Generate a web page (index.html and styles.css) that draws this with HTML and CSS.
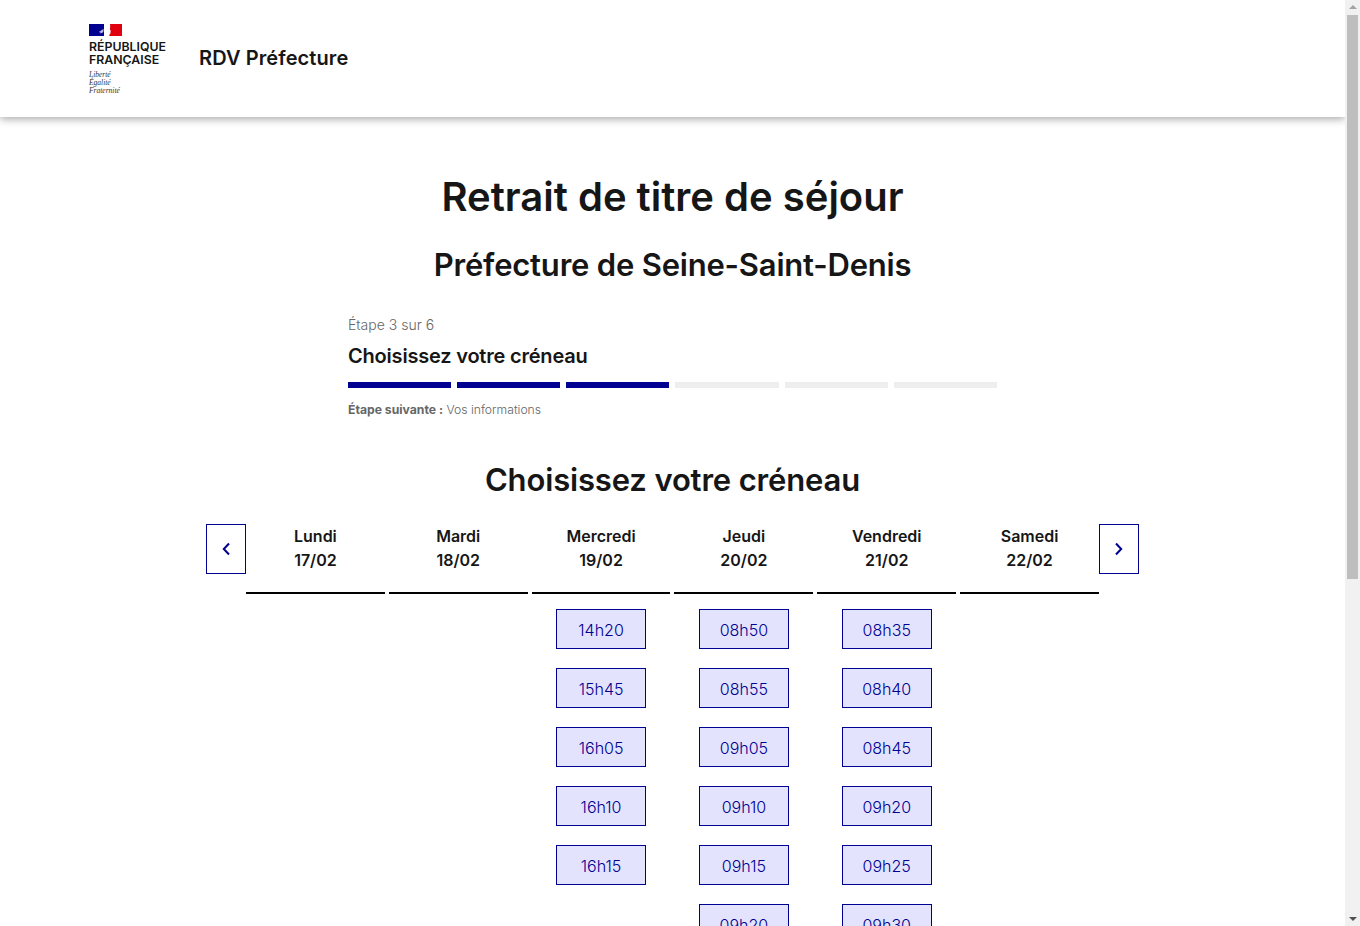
FILE: index.html
```html
<!DOCTYPE html>
<html lang="fr">
<head>
	<meta charset="UTF-8">
	<title>Retrait de titre de séjour - RDV Préfecture</title>
	<link rel="stylesheet" href="styles.css">
</head>
<body>
	<div class="page">
		<header class="entete">
			<div class="logo">
				<svg class="drapeau" viewBox="0 0 33 12" width="33" height="12" aria-hidden="true">
					<rect width="33" height="12" fill="#fff"/>
					<rect width="15" height="12" fill="#000091"/>
					<path d="M21 0h12v12H20.500c-.6-1 .2-2.200 1-2.600l-.2-1 .6-.5-.6-.6.5-.5-.9-1.300C20.600 4.300 21.700 3 21 0z" fill="#e1000f"/>
					<path d="M14.500 5c-1.200.4-2.300 1.300-3 2.100-.5.500-1.100.8-1.700 1 .7.300 1.300.3 1.900.1-.2.400-.5.700-.9 1 1.200.1 2.400-.4 3.100-1 .3-.3.5-.6.600-.9z" fill="#b9badf"/>
					<path d="M15 0h3.500c.8 1.600 1.200 3 1.900 4.300l.7 1.300-.6.4.5.6-.5.6.3 1c-.9.500-1.700 1.700-1.100 3.800H15z" fill="#fff"/>
				</svg>
				<p class="logoNom">République<br>Française</p>
				<p class="logoDevise">Liberté<br>Égalité<br>Fraternité</p>
			</div>
			<p class="service">RDV Préfecture</p>
		</header>

		<main class="contenu">
			<h1>Retrait de titre de séjour</h1>
			<h2 class="prefecture">Préfecture de Seine-Saint-Denis</h2>

			<section class="etapes">
				<p class="etapeNum">Étape 3 sur 6</p>
				<p class="etapeTitre">Choisissez votre créneau</p>
				<div class="barres">
					<span class="barre faite"></span>
					<span class="barre faite"></span>
					<span class="barre faite"></span>
					<span class="barre"></span>
					<span class="barre"></span>
					<span class="barre"></span>
				</div>
				<p class="etapeSuivante"><b>Étape suivante :</b> Vos informations</p>
			</section>

			<h2 class="choix">Choisissez votre créneau</h2>

			<section class="calendrier">
				<button class="fleche" aria-label="Précédent">
					<svg viewBox="0 0 10 14" width="10" height="14"><path d="M8 1.500 2.800 7 8 12.500" fill="none" stroke="#000091" stroke-width="2"/></svg>
				</button>
				<div class="jours">
					<div class="jour">
						<div class="jourTitre">Lundi<br>17/02</div>
					</div>
					<div class="jour">
						<div class="jourTitre">Mardi<br>18/02</div>
					</div>
					<div class="jour">
						<div class="jourTitre">Mercredi<br>19/02</div>
						<a class="creneau" href="#">14h20</a>
						<a class="creneau" href="#">15h45</a>
						<a class="creneau" href="#">16h05</a>
						<a class="creneau" href="#">16h10</a>
						<a class="creneau" href="#">16h15</a>
					</div>
					<div class="jour">
						<div class="jourTitre">Jeudi<br>20/02</div>
						<a class="creneau" href="#">08h50</a>
						<a class="creneau" href="#">08h55</a>
						<a class="creneau" href="#">09h05</a>
						<a class="creneau" href="#">09h10</a>
						<a class="creneau" href="#">09h15</a>
						<a class="creneau" href="#">09h20</a>
					</div>
					<div class="jour">
						<div class="jourTitre">Vendredi<br>21/02</div>
						<a class="creneau" href="#">08h35</a>
						<a class="creneau" href="#">08h40</a>
						<a class="creneau" href="#">08h45</a>
						<a class="creneau" href="#">09h20</a>
						<a class="creneau" href="#">09h25</a>
						<a class="creneau" href="#">09h30</a>
					</div>
					<div class="jour">
						<div class="jourTitre">Samedi<br>22/02</div>
					</div>
				</div>
				<button class="fleche" aria-label="Suivant">
					<svg viewBox="0 0 10 14" width="10" height="14"><path d="M2 1.500 7.200 7 2 12.500" fill="none" stroke="#000091" stroke-width="2"/></svg>
				</button>
			</section>
		</main>
	</div>

	<div class="ascenseur" aria-hidden="true">
		<span class="ascFleche haut"></span>
		<span class="ascPouce"></span>
		<span class="ascFleche bas"></span>
	</div>
</body>
</html>
```

FILE: styles.css
```css
*{
	margin:0;
	padding:0;
	box-sizing: border-box;
}
body{
	height: 100vh;
	display: flex;
	overflow: hidden;
	font-family: Inter, "Noto Sans", sans-serif;
	font-size: 16px;
	color: #161616;
	background: #fff;
}
.page{
	flex: 1;
	min-width: 0;
	overflow: hidden;
}
.ascenseur{
	flex: none;
	width: 15px;
	display: flex;
	flex-direction: column;
	align-items: center;
	background: #f1f1f1;
}
.ascFleche{
	flex: none;
	width: 0;
	height: 0;
	border-left: 4px solid transparent;
	border-right: 4px solid transparent;
}
.ascFleche.haut{
	margin-top: 5px;
	margin-bottom: 6px;
	border-bottom: 4px solid #a3a3a3;
}
.ascFleche.bas{
	margin-top: auto;
	margin-bottom: 5px;
	border-top: 4px solid #505050;
}
.ascPouce{
	flex: none;
	width: 11px;
	height: 564px;
	background: #bebebe;
}
.entete{
	height: 117px;
	padding: 24px 89px 0;
	display: flex;
	align-items: flex-start;
	background: #fff;
	box-shadow: 0 2px 8px rgba(0,0,0,.35);
}
.logo{
	width: 110px;
}
.drapeau{
	display: block;
}
.logoNom{
	margin-top: 4px;
	font-size: 12.3px;
	font-weight: 600;
	line-height: 13px;
	text-transform: uppercase;
}
.logoDevise{
	margin-top: 5px;
	font-family: "Liberation Serif", serif;
	font-style: italic;
	font-size: 7.5px;
	line-height: 8px;
	color: #333;
}
.service{
	margin-top: 21px;
	font-size: 20px;
	font-weight: 600;
	line-height: 26px;
	letter-spacing: .1px;
}
h1{
	margin-top: 55px;
	text-align: center;
	font-size: 40px;
	font-weight: 600;
	line-height: 50px;
}
.prefecture{
	margin-top: 21px;
	text-align: center;
	font-size: 31px;
	font-weight: 600;
	line-height: 44px;
	letter-spacing: -.2px;
}
.etapes{
	width: 649px;
	margin: 26px auto 0;
}
.etapeNum{
	font-size: 14px;
	font-weight: 300;
	line-height: 24px;
	color: #666;
}
.etapeTitre{
	margin-top: 5px;
	font-size: 20px;
	font-weight: 600;
	line-height: 28px;
	letter-spacing: -.2px;
}
.barres{
	margin-top: 12px;
	display: grid;
	grid-template-columns: repeat(6, 1fr);
	gap: 6px;
}
.barre{
	height: 6px;
	background: #eee;
}
.barre.faite{
	background: #000091;
}
.etapeSuivante{
	margin-top: 12px;
	font-size: 12.2px;
	font-weight: 300;
	line-height: 20px;
	color: #666;
}
.etapeSuivante b{
	font-weight: 700;
}
.choix{
	margin-top: 38px;
	text-align: center;
	font-size: 31px;
	font-weight: 600;
	line-height: 44px;
	letter-spacing: -.15px;
}
.calendrier{
	width: 933px;
	margin: 22px auto 0;
	display: flex;
	align-items: flex-start;
}
.fleche{
	flex: none;
	width: 40px;
	height: 50px;
	display: flex;
	align-items: center;
	justify-content: center;
	border: 1px solid #000091;
	background: #fff;
	cursor: pointer;
}
.jours{
	flex: 1;
	display: grid;
	grid-template-columns: repeat(6, 1fr);
	gap: 4px;
}
.jour{
	display: flex;
	flex-direction: column;
	align-items: center;
}
.jourTitre{
	width: 100%;
	height: 70px;
	margin-bottom: 15px;
	border-bottom: 2px solid #000;
	text-align: center;
	font-size: 16px;
	font-weight: 600;
	line-height: 24px;
}
.creneau{
	width: 90px;
	height: 40px;
	margin-bottom: 19px;
	padding-top: 1px;
	display: flex;
	align-items: center;
	justify-content: center;
	border: 1px solid #000091;
	background: #e3e3fd;
	color: #000091;
	font-size: 16px;
	font-weight: 300;
	text-decoration: none;
}
```
